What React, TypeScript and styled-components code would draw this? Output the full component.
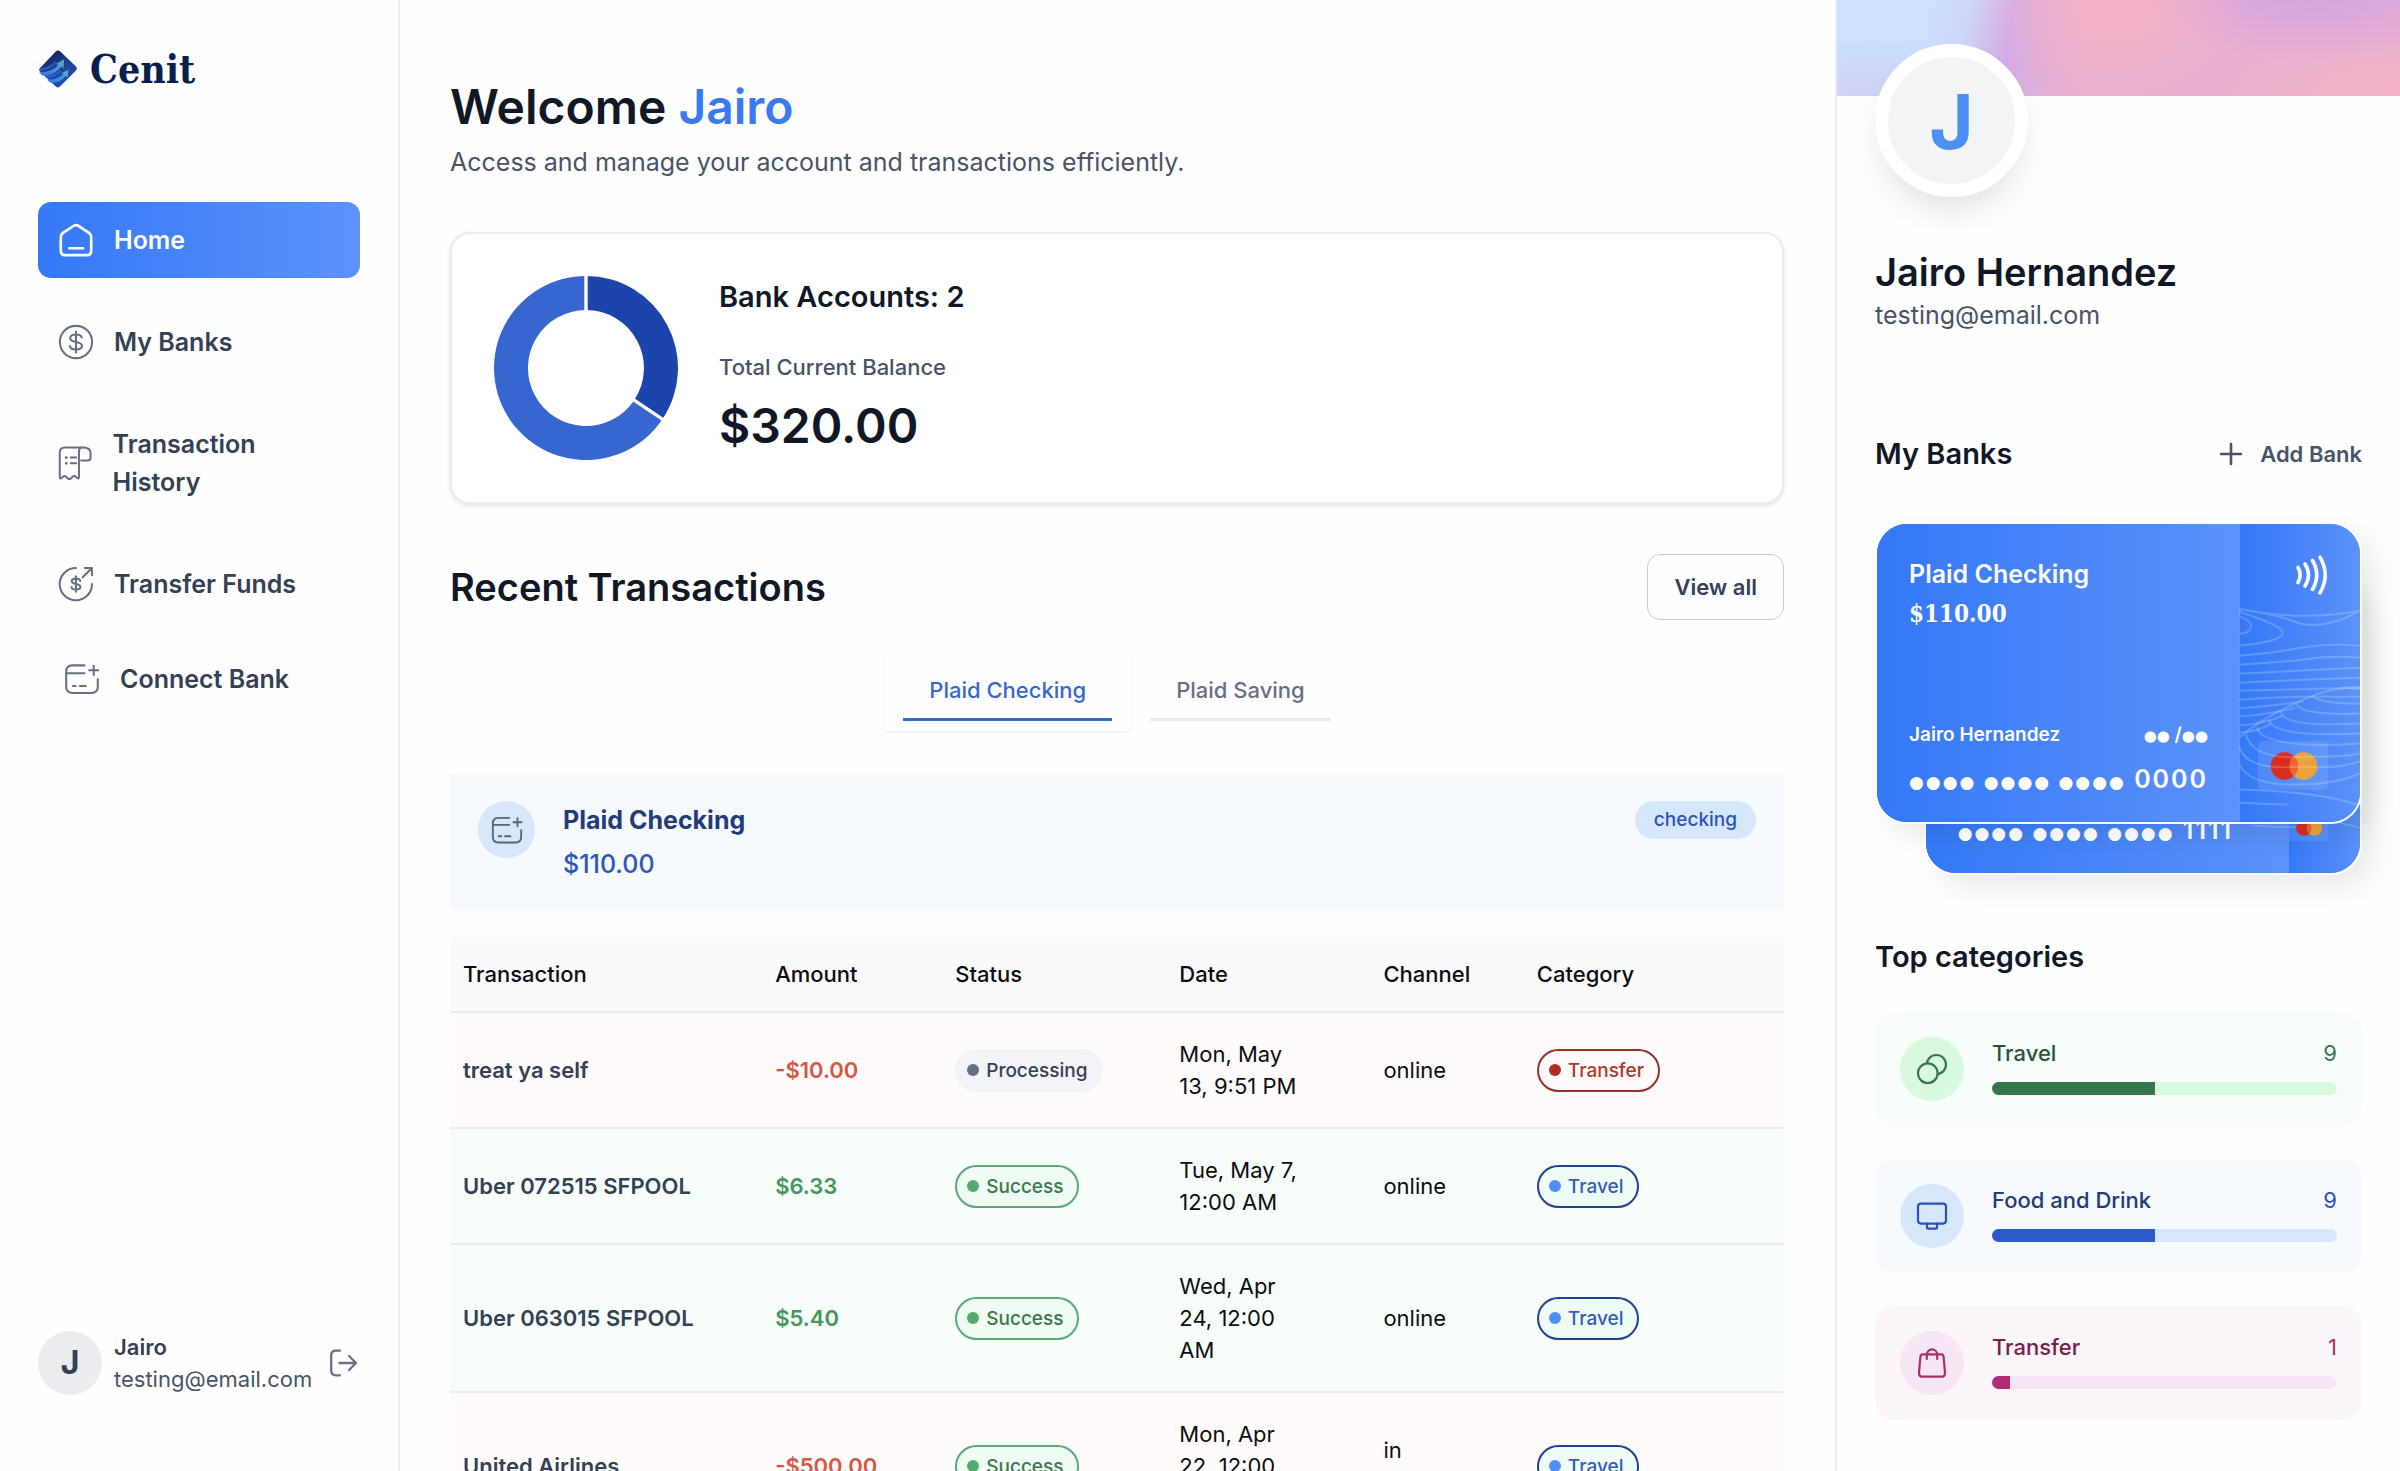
import React from "react";
import styled, { createGlobalStyle, css } from "styled-components";

const GlobalStyle = createGlobalStyle`
  *, *::before, *::after { box-sizing: border-box; }
  body {
    margin: 0;
    background: #fefefe;
    color: #0b0d12;
    font-family: Inter, "Liberation Sans", sans-serif;
    font-size: 22px;
    line-height: 32px;
  }
  h1, h2, h3, p { margin: 0; }
  button { font: inherit; color: inherit; background: none; border: 0; padding: 0; cursor: pointer; }
  a { color: inherit; text-decoration: none; }
  svg { display: block; }
`;

const ink = "#101828";
const slate = "#344054";
const muted = "#475467";
const hairline = "#eaecf0";
const gradient = "linear-gradient(90deg, #3478f6, #5c92f9)";
const serif = `"DejaVu Serif Condensed", "DejaVu Serif", serif`;

/* ---------- shell ---------- */

const Shell = styled.div`
  display: flex;
  height: 100vh;
`;

const Sidebar = styled.aside`
  display: flex;
  flex: 0 0 400px;
  flex-direction: column;
  justify-content: space-between;
  padding: 50px 38px 76px;
  border-right: 2px solid #eeeff1;
`;

const Main = styled.main`
  flex: 1;
  min-width: 0;
  overflow-y: auto;
  scrollbar-width: none;
  padding: 77px 51px 0 50px;
`;

const RightPanel = styled.aside`
  flex: 0 0 565px;
  overflow-y: auto;
  scrollbar-width: none;
  border-left: 2px solid #eaecf0;
`;

/* ---------- sidebar ---------- */

const Brand = styled.a`
  display: flex;
  align-items: center;
  gap: 12px;
  height: 38px;
  margin-bottom: 114px;
  color: #0b1f4f;
  font-family: ${serif};
  font-size: 39px;
  font-weight: 700;
`;

const Nav = styled.nav`
  display: flex;
  flex-direction: column;
  gap: 26px;
`;

const navItem = css`
  display: flex;
  align-items: center;
  gap: 19px;
  font-size: 25px;
  font-weight: 600;
  line-height: 38px;
  text-align: left;
`;

const NavLink = styled.a<{ $active?: boolean }>`
  ${navItem}
  padding: 19px;
  border-radius: 13px;
  color: ${(p) => (p.$active ? "#fff" : slate)};
  background: ${(p) => (p.$active ? gradient : "none")};
`;

const ConnectButton = styled.button`
  ${navItem}
  padding: 12px 25px;
  color: ${slate};
`;

const NavIcon = styled.svg`
  flex: 0 1 38px;
  width: 38px;
  height: 38px;
  fill: none;
  stroke: currentColor;
  stroke-width: 1.3;
  stroke-linecap: round;
  stroke-linejoin: round;
  ${NavLink}:not([aria-current]) &, ${ConnectButton} & { color: #667085; }
`;

const UserFooter = styled.footer`
  display: flex;
  align-items: center;
  gap: 12px;
`;

const UserInitial = styled.span`
  display: grid;
  place-items: center;
  flex: 0 0 64px;
  height: 64px;
  border-radius: 50%;
  background: #eaecf0;
  color: ${slate};
  font-size: 32px;
  font-weight: 700;
`;

const UserText = styled.div`
  flex: 1;
  color: ${muted};
  white-space: nowrap;
`;

const UserName = styled.p`
  color: ${slate};
  font-weight: 600;
`;

const LogoutButton = styled.button`
  flex: 0 0 32px;
  color: #667085;
`;

/* ---------- overview ---------- */

const Title = styled.h1`
  margin-bottom: 6px;
  color: ${ink};
  font-size: 48px;
  font-weight: 600;
  line-height: 60px;
  span { color: #3a7af0; }
`;

const Lead = styled.p`
  color: ${muted};
  font-size: 25px;
  line-height: 38px;
`;

const BalanceCard = styled.section`
  display: flex;
  align-items: center;
  gap: 41px;
  margin-top: 51px;
  padding: 42px;
  border: 2px solid #eaecf0;
  border-radius: 20px;
  background: #fff;
  box-shadow: 0 2px 4px rgba(16, 24, 40, 0.1);
`;

const CardHeading = styled.h2`
  color: ${ink};
  font-size: 29px;
  font-weight: 600;
  line-height: 36px;
`;

const BalanceLabel = styled.p`
  margin-top: 36px;
  color: ${muted};
  font-weight: 500;
`;

const BalanceValue = styled.p`
  margin-top: 16px;
  margin-bottom: 4px;
  color: ${ink};
  font-size: 48px;
  font-weight: 600;
  line-height: 54px;
`;

/* ---------- transactions ---------- */

const SectionBar = styled.header`
  display: flex;
  align-items: center;
  justify-content: space-between;
  margin-top: 50px;
`;

const SectionTitle = styled.h2`
  color: ${ink};
  font-size: 38px;
  font-weight: 600;
  line-height: 48px;
`;

const ViewAll = styled.a`
  padding: 16px 26px;
  border: 1px solid #c8cdd3;
  border-radius: 13px;
  color: ${slate};
  font-weight: 600;
`;

const Tabs = styled.div`
  display: flex;
  justify-content: center;
  margin: 32px 0 43px;
`;

const Tab = styled.button<{ $active?: boolean }>`
  padding: 10px 19px;
  border-radius: 3px;
  color: ${(p) => (p.$active ? "#3766d0" : "#667085")};
  font-weight: 500;
  box-shadow: ${(p) => (p.$active ? "0 1px 3px rgba(16, 24, 40, 0.08)" : "none")};
  span {
    display: block;
    padding: 12px 26px;
    border-bottom: 3px solid ${(p) => (p.$active ? "#3766d0" : "#eaeaec")};
  }
`;

const AccountBanner = styled.section`
  display: flex;
  align-items: flex-start;
  gap: 28px;
  padding: 27px 28px;
  background: #f6f9fe;
`;

const AccountIcon = styled.span`
  display: grid;
  place-items: center;
  width: 57px;
  height: 57px;
  border-radius: 50%;
  background: #d6e7fb;
  color: #56637a;
`;

const AccountText = styled.div`
  flex: 1;
  font-size: 25px;
  line-height: 38px;
`;

const AccountName = styled.h3`
  margin-bottom: 6px;
  color: #223c78;
  font-size: 25px;
  font-weight: 700;
`;

const AccountAmount = styled.p`
  color: #2c57b8;
  font-weight: 500;
`;

const AccountType = styled.span`
  padding: 5px 19px;
  border-radius: 19px;
  background: #d6e7fb;
  color: #2c52b8;
  font-size: 19px;
  font-weight: 500;
  line-height: 28px;
`;

const Table = styled.table`
  width: 100%;
  margin-top: 27px;
  table-layout: fixed;
  border-spacing: 0;
  text-align: left;
`;

const HeadCell = styled.th<{ $share: number }>`
  width: ${(p) => p.$share}%;
  height: 76px;
  padding: 0 13px;
  border-bottom: 2px solid ${hairline};
  background: #f9fafc;
  font-weight: 500;
`;

const Row = styled.tr<{ $debit: boolean }>`
  background: ${(p) => (p.$debit ? "#fefbfa" : "#f7fdf9")};
`;

const Cell = styled.td<{ $end?: number }>`
  padding: 25px ${(p) => p.$end ?? 13}px 25px 13px;
  border-bottom: 2px solid ${hairline};
`;

const NameCell = styled(Cell)`
  color: ${slate};
  font-weight: 600;
  white-space: nowrap;
`;

const AmountCell = styled(Cell)<{ $debit: boolean }>`
  color: ${(p) => (p.$debit ? "#d65746" : "#45965d")};
  font-weight: 600;
`;

type Tone = "processing" | "success" | "transfer" | "travel";

const tones: Record<Tone, { edge: string; fill: string; dot: string; text: string }> = {
  processing: { edge: "#f2f4f9", fill: "#f2f4f9", dot: "#667085", text: slate },
  success: { edge: "#5aa777", fill: "#effcf4", dot: "#54ab6d", text: "#3b774d" },
  transfer: { edge: "#96302a", fill: "#fefbfa", dot: "#ae2c23", text: "#b0372c" },
  travel: { edge: "#1f4192", fill: "#effbf5", dot: "#4f8ff7", text: "#325dbb" },
};

const Pill = styled.span<{ $tone: Tone }>`
  display: inline-flex;
  align-items: center;
  gap: 7px;
  padding: 5px 14px 5px 10px;
  border: 2px solid ${(p) => tones[p.$tone].edge};
  border-radius: 22px;
  background: ${(p) => tones[p.$tone].fill};
  color: ${(p) => tones[p.$tone].text};
  font-size: 19px;
  font-weight: 500;
  line-height: 29px;
  vertical-align: middle;
  &::before {
    content: "";
    width: 12px;
    height: 12px;
    border-radius: 50%;
    background: ${(p) => tones[p.$tone].dot};
  }
`;

/* ---------- right panel ---------- */

const Cover = styled.div`
  height: 96px;
  background:
    radial-gradient(ellipse 130px 110px at 49% -10%, rgba(246, 179, 196, 0.85) 10%, rgba(246, 179, 196, 0) 100%),
    radial-gradient(ellipse 190px 90px at 84% -30%, #cf9fe4 10%, rgba(207, 159, 228, 0) 100%),
    radial-gradient(ellipse 180px 70px at 100% 100%, #f3b3c4 0%, rgba(243, 179, 196, 0) 100%),
    radial-gradient(ellipse 200px 90px at 6% 130%, rgba(213, 200, 240, 0.9) 0%, rgba(213, 200, 240, 0) 100%),
    linear-gradient(102deg, #cbe1ff 16%, #cfd6fa 23%, #d3a9e6 31%, #deaddb 36%, #e9b0ce 44%, #e8b0cf 100%);
`;

const PanelBody = styled.div`
  padding: 0 38px;
`;

const Avatar = styled.div`
  position: relative;
  display: grid;
  place-items: center;
  width: 153px;
  height: 153px;
  margin-top: -52px;
  border: 13px solid #fff;
  border-radius: 50%;
  background: #f2f4f6;
  box-shadow: 0 19px 30px -8px rgba(16, 24, 40, 0.13);
  color: #4f8ff3;
  font-size: 76px;
  font-weight: 700;
`;

const ProfileName = styled.h2`
  margin-top: 51px;
  color: ${ink};
  font-size: 38px;
  font-weight: 600;
  line-height: 48px;
`;

const PanelBar = styled.header`
  display: flex;
  align-items: center;
  justify-content: space-between;
  margin: 102px 0 50px;
`;

const AddBank = styled.a`
  display: flex;
  align-items: center;
  gap: 13px;
  color: ${muted};
  font-weight: 600;
`;

const CardStack = styled.div`
  display: flex;
  flex-direction: column;
  align-items: flex-end;
`;

const BankCard = styled.a<{ $behind?: boolean }>`
  position: relative;
  z-index: ${(p) => (p.$behind ? 0 : 1)};
  display: flex;
  width: ${(p) => (p.$behind ? 90 : 100)}%;
  height: 302px;
  margin-top: ${(p) => (p.$behind ? -251 : 0)}px;
  overflow: hidden;
  border: 2px solid #fff;
  border-radius: 32px;
  background: ${gradient};
  box-shadow: 12px 12px 25px rgba(0, 0, 0, 0.08);
  color: #fff;
`;

const CardFace = styled.div`
  display: flex;
  flex: 0 0 363px;
  flex-direction: column;
  justify-content: space-between;
  min-width: 0;
  padding: 31px 32px 24px;
  background: ${gradient};
  font-size: 25px;
  font-weight: 600;
  line-height: 38px;
`;

const CardBalance = styled.p`
  margin-top: 2px;
  font-family: ${serif};
  font-size: 24px;
  font-weight: 700;
`;

const CardHolder = styled.div`
  display: flex;
  justify-content: space-between;
  margin-bottom: 11px;
  font-size: 19px;
  line-height: 28px;
`;

const CardNumber = styled.p`
  letter-spacing: 2px;
  white-space: nowrap;
`;

const Bullets = styled.span<{ $small?: boolean }>`
  font-family: "DejaVu Sans", sans-serif;
  font-size: ${(p) => (p.$small ? 15 : 17)}px;
  font-weight: 400;
  line-height: 1;
`;

const CardSide = styled.div`
  display: flex;
  flex: 1;
  flex-direction: column;
  align-items: flex-end;
  justify-content: space-between;
  min-width: 0;
  padding: 31px 32px 32px 0;
  background: ${gradient};
  svg { max-width: 100%; height: auto; }
`;

const CardLines = styled.svg`
  position: absolute;
  top: 0;
  right: 0;
  width: 25%;
  fill: none;
  stroke: rgba(255, 255, 255, 0.2);
  stroke-width: 2;
`;

const CategoriesTitle = styled(CardHeading)`
  margin: 64px 0 37px;
`;

const CategoryList = styled.div`
  display: flex;
  flex-direction: column;
  gap: 33px;
`;

interface Palette {
  card: string;
  soft: string;
  label: string;
  strong: string;
  bar: string;
}

const CategoryCard = styled.section<{ $p: Palette }>`
  display: flex;
  gap: 28px;
  padding: 25px;
  border-radius: 19px;
  background: ${(c) => c.$p.card};
  color: ${(c) => c.$p.label};
  font-weight: 500;
`;

const CategoryIcon = styled.span<{ $p: Palette }>`
  display: grid;
  place-items: center;
  width: 64px;
  height: 64px;
  border-radius: 50%;
  background: ${(c) => c.$p.soft};
  color: ${(c) => c.$p.strong};
`;

const CategoryBody = styled.div`
  flex: 1;
`;

const CategoryRow = styled.div`
  display: flex;
  justify-content: space-between;
  margin-bottom: 13px;
`;

const Count = styled.span<{ $p: Palette }>`
  color: ${(c) => c.$p.strong};
  font-weight: 400;
`;

const Track = styled.div<{ $p: Palette }>`
  height: 13px;
  overflow: hidden;
  border-radius: 7px;
  background: ${(c) => c.$p.soft};
`;

const Fill = styled.div<{ $p: Palette }>`
  height: 100%;
  background: ${(c) => c.$p.bar};
`;

/* ---------- icons ---------- */

const BrandMark = () => (
  <svg width="40" height="38" viewBox="0 0 40 38" aria-hidden="true">
    <defs>
      <linearGradient id="mark" x1="0.2" y1="0" x2="0.6" y2="1">
        <stop offset="0" stopColor="#0d1f52" />
        <stop offset="0.5" stopColor="#1c4390" />
        <stop offset="1" stopColor="#2350c4" />
      </linearGradient>
      <linearGradient id="sweep" x1="0" y1="1" x2="1" y2="0">
        <stop offset="0" stopColor="#2f6fe8" />
        <stop offset="1" stopColor="#5fb3c4" />
      </linearGradient>
    </defs>
    <path d="M18 1.2Q20 -0.4 22 1.2L38 16.6Q39.6 18.4 38 20.4L22 36.6Q20 38.4 18 36.8L2 21.6Q0.6 20 1.6 18.4Z" fill="url(#mark)" />
    <path d="M1 22.6Q16 22 20.6 14.6L17 14.4L26 9.6L25.4 19L23.4 16.6Q16 26.6 4.6 25.6Z" fill="url(#sweep)" />
    <path d="M9 29.6Q21 30 25.4 23.8L22.6 23.4L30.4 20L29.6 28L27.8 25.8Q22 33.6 12 32.6Z" fill="url(#sweep)" />
    <path d="M2 19.6Q12 19 17.6 12" fill="none" stroke="#2f63d6" strokeWidth="1.6" />
    <path d="M7.6 27.2Q17 26.6 22.6 20.6" fill="none" stroke="#2f63d6" strokeWidth="1.6" />
  </svg>
);

const HomeIcon = () => (
  <NavIcon viewBox="0 0 24 24" aria-hidden="true">
    <path strokeWidth="1.7" d="M3.8 7.5L10.6 3Q12 2.1 13.4 3L20.2 7.5Q21.6 8.5 21.6 10.1V18.8Q21.6 21.6 18.8 21.6H5.2Q2.4 21.6 2.4 18.8V10.1Q2.4 8.5 3.8 7.5Z" />
    <path strokeWidth="1.7" d="M7.8 17.2h8.6" />
  </NavIcon>
);

const BanksIcon = () => (
  <NavIcon viewBox="0 0 24 24" aria-hidden="true">
    <circle cx="12" cy="12" r="10.2" />
    <path d="M15.6 9.2C15.4 7.9 14 7.3 12 7.3S8.3 8.1 8.3 9.6C8.3 12.9 15.8 11 15.8 14.4 15.8 16 14.2 16.7 12 16.7S8.3 16 8.2 14.6M12 5.4v13.2" />
  </NavIcon>
);

const HistoryIcon = () => (
  <NavIcon viewBox="0 0 24 24" aria-hidden="true">
    <path d="M18.4 1.8H5.2Q1.8 1.8 1.8 5.2V21.4q0 1.2 1.1.5l1.2-1q1-.8 1.9.2l1.2 1q.9.8 1.8 0l1.2-1q.9-1 1.9-.2l1.2 1q1.1.7 1.1-.5V4.6q0-2.8 2.4-2.8Q22 1.8 22 5.4V8.6Q22 10.4 20.2 10.4H15.8" />
    <path d="M9 8.4h3.6M9 12.2h3.6" />
    <path strokeWidth="1.8" d="M6 8.4h.1M6 12.2h.1" />
  </NavIcon>
);

const TransferIcon = () => (
  <NavIcon viewBox="0 0 24 24" aria-hidden="true">
    <path d="M12 1.9A10.2 10.2 0 1 0 22.1 12" />
    <path d="M16.2 7.8L22 2M17.6 1.9H22.1V6.4" />
    <path d="M14.6 10.1C14.5 9 13.4 8.6 12 8.6S9.3 9.1 9.3 10.3C9.3 12.7 14.8 11.4 14.8 13.8 14.8 15 13.6 15.5 12 15.5S9.2 15 9.2 13.9M12 7.1v9.8" />
  </NavIcon>
);

const cardPlusPath = "M13.6 3.4H6Q2 3.4 2 7.4V16.8Q2 20.8 6 20.8H18Q22 20.8 22 16.8V12.2M2 8.4H13.6M19.4 3.6V9.4M16.5 6.5H22.3M6.2 16.4H8M10.6 16.4H14.4";

const ConnectIcon = () => (
  <NavIcon viewBox="0 0 24 24" aria-hidden="true">
    <path d={cardPlusPath} />
  </NavIcon>
);

const LogoutIcon = () => (
  <svg width="32" height="32" viewBox="0 0 24 24" fill="none" stroke="currentColor" strokeWidth="1.7" strokeLinecap="round" strokeLinejoin="round" aria-hidden="true">
    <path d="M9 2.8H6Q2.4 2.8 2.4 6.4V17.6Q2.4 21.2 6 21.2H9M8.6 12H21M15.8 6.8L21 12L15.8 17.2" />
  </svg>
);

const ContactlessIcon = () => (
  <svg width="32" height="40" viewBox="0 0 32 40" fill="none" stroke="#fff" strokeWidth="3.6" strokeLinecap="round" aria-hidden="true">
    <path d="M2 12.5Q6.4 20 2 27.5M9 9Q16 20 9 31M16.5 5.5Q25 20 16.5 34.5M24 2.2Q34.4 20 24 37.8" />
  </svg>
);

const MastercardIcon = () => (
  <svg width="70" height="49" viewBox="0 0 70 49" aria-label="Mastercard" role="img">
    <rect width="70" height="49" rx="5" fill="#fff" fillOpacity="0.1" />
    <circle cx="26.5" cy="25" r="13.8" fill="#da2c1f" />
    <circle cx="45.5" cy="25" r="13.8" fill="#eba23a" />
    <path d="M36 15A13.8 13.8 0 0 1 36 35A13.8 13.8 0 0 1 36 15Z" fill="#ea6434" />
  </svg>
);

const Lines = () => (
  <CardLines viewBox="0 0 121 302" aria-hidden="true">
    <path d="M0 85Q62 98 121 87M0 86Q30 88 62 100Q90 105 121 87M0 88Q30 98 40 104Q50 112 32 117Q16 121 0 122M0 92Q14 98 12 103Q10 110 0 110" />
    <path d="M0 132Q34 129 62 124Q92 119 121 122M0 141Q50 138 78 134Q100 132 121 134M0 150Q60 147 121 144M0 159Q60 156 121 154M0 167Q70 165 121 164M0 176Q60 172 95 173H121" />
    <path d="M0 185Q40 181 65 178M0 193Q36 190 56 184M0 202Q26 200 44 192M0 209Q18 209 32 200" />
    <path d="M0 214Q24 194 64 176Q90 164 121 163M106 163q6 3 15 2M74 173Q84 180 121 180M57 180Q62 192 121 190M42 188Q44 204 121 200M30 196Q34 214 121 210M18 204Q24 226 121 220M7 211Q14 238 70 233Q100 234 121 230M0 222Q6 248 62 243Q96 246 121 238M0 240Q10 266 80 260Q104 258 121 250" />
    <path d="M0 266Q80 268 121 282M0 279Q30 281 50 281" />
  </CardLines>
);

const iconProps = {
  width: 32,
  height: 32,
  viewBox: "0 0 32 32",
  fill: "none",
  stroke: "currentColor",
  strokeWidth: 2.2,
  strokeLinejoin: "round",
  strokeLinecap: "round",
  "aria-hidden": true,
} as const;

const CoinsIcon = () => (
  <svg {...iconProps}>
    <circle cx="20.4" cy="11.6" r="9.6" />
    <circle cx="11.8" cy="20.2" r="9.8" fill="#d8f9df" />
  </svg>
);

const MonitorIcon = () => (
  <svg {...iconProps}>
    <rect x="2" y="3.6" width="28" height="20" rx="3" />
    <path d="M11 23.6V27.4Q11 28.6 12.2 28.6H19.8Q21 28.6 21 27.4V23.6" />
  </svg>
);

const BagIcon = () => (
  <svg {...iconProps}>
    <path d="M7 7.4H25Q27.4 7.4 27.6 9.8L29 26Q29 29.6 26 29.6H6Q3 29.6 3 26L4.4 9.8Q4.6 7.4 7 7.4Z" />
    <path d="M10.8 12V7.6A5.2 5.2 0 0 1 21.2 7.6V12" />
  </svg>
);

const BalanceChart = () => (
  <svg width="184" height="184" viewBox="0 0 184 184" role="img" aria-label="Balance by account">
    <path d="M92 0A92 92 0 0 1 168.5 143.1L140.2 124.2A58 58 0 0 0 92 34Z" fill="#1c44ad" />
    <path d="M168.5 143.1A92 92 0 1 1 92 0V34A58 58 0 1 0 140.2 124.2Z" fill="#3766d0" />
    <path d="M92 0V35M139 123.4L169.5 143.8" stroke="#fff" strokeWidth="3.4" />
  </svg>
);

/* ---------- data ---------- */

const columns = [
  { label: "Transaction", share: 23.4 },
  { label: "Amount", share: 13.5 },
  { label: "Status", share: 16.8 },
  { label: "Date", share: 15.3 },
  { label: "Channel", share: 11.5 },
  { label: "Category", share: 19.5 },
];

const transactions: {
  name: string;
  amount: string;
  status: [Tone, string];
  date: string;
  channel: string;
  category: [Tone, string];
}[] = [
  { name: "treat ya self", amount: "-$10.00", status: ["processing", "Processing"], date: "Mon, May 13, 9:51 PM", channel: "online", category: ["transfer", "Transfer"] },
  { name: "Uber 072515 SFPOOL", amount: "$6.33", status: ["success", "Success"], date: "Tue, May 7, 12:00 AM", channel: "online", category: ["travel", "Travel"] },
  { name: "Uber 063015 SFPOOL", amount: "$5.40", status: ["success", "Success"], date: "Wed, Apr 24, 12:00 AM", channel: "online", category: ["travel", "Travel"] },
  { name: "United Airlines", amount: "-$500.00", status: ["success", "Success"], date: "Mon, Apr 22, 12:00 AM", channel: "in store", category: ["travel", "Travel"] },
];

const categories: { name: string; count: number; icon: React.ReactNode; palette: Palette }[] = [
  { name: "Travel", count: 9, icon: <CoinsIcon />, palette: { card: "#f7fdf9", soft: "#d8f9df", label: "#28543a", strong: "#35774a", bar: "#35774a" } },
  { name: "Food and Drink", count: 9, icon: <MonitorIcon />, palette: { card: "#f6f9fe", soft: "#d6e7fb", label: "#223c78", strong: "#2c52b8", bar: "#2c5aca" } },
  { name: "Transfer", count: 1, icon: <BagIcon />, palette: { card: "#fcf6fb", soft: "#f6e6f3", label: "#74204e", strong: "#a92c6c", bar: "#b02c74" } },
];

const categoryTotal = categories.reduce((sum, c) => sum + c.count, 0);

const cards = [
  { name: "Plaid Checking", balance: "$110.00", mask: "0000" },
  { name: "Plaid Saving", balance: "$210.00", mask: "1111" },
];

/* ---------- page ---------- */

export default function App() {
  return (
    <>
      <GlobalStyle />
      <Shell>
        <Sidebar>
          <div>
            <Brand href="#">
              <BrandMark />
              Cenit
            </Brand>
            <Nav>
              <NavLink href="#home" $active aria-current="page"><HomeIcon />Home</NavLink>
              <NavLink href="#banks"><BanksIcon />My Banks</NavLink>
              <NavLink href="#history"><HistoryIcon />Transaction History</NavLink>
              <NavLink href="#transfer"><TransferIcon />Transfer Funds</NavLink>
              <ConnectButton type="button"><ConnectIcon />Connect Bank</ConnectButton>
            </Nav>
          </div>
          <UserFooter>
            <UserInitial>J</UserInitial>
            <UserText>
              <UserName>Jairo</UserName>
              <p>testing@email.com</p>
            </UserText>
            <LogoutButton type="button" aria-label="Log out"><LogoutIcon /></LogoutButton>
          </UserFooter>
        </Sidebar>

        <Main>
          <header>
            <Title>Welcome <span>Jairo</span></Title>
            <Lead>Access and manage your account and transactions efficiently.</Lead>
          </header>

          <BalanceCard>
            <BalanceChart />
            <div>
              <CardHeading>Bank Accounts: 2</CardHeading>
              <BalanceLabel>Total Current Balance</BalanceLabel>
              <BalanceValue>$320.00</BalanceValue>
            </div>
          </BalanceCard>

          <SectionBar>
            <SectionTitle>Recent Transactions</SectionTitle>
            <ViewAll href="#history">View all</ViewAll>
          </SectionBar>

          <Tabs role="tablist">
            <Tab type="button" role="tab" aria-selected="true" $active><span>Plaid Checking</span></Tab>
            <Tab type="button" role="tab" aria-selected="false"><span>Plaid Saving</span></Tab>
          </Tabs>

          <AccountBanner>
            <AccountIcon>
              <svg width="34" height="34" viewBox="0 0 24 24" fill="none" stroke="currentColor" strokeWidth="1.3" strokeLinecap="round" aria-hidden="true">
                <path d={cardPlusPath} />
              </svg>
            </AccountIcon>
            <AccountText>
              <AccountName>Plaid Checking</AccountName>
              <AccountAmount>$110.00</AccountAmount>
            </AccountText>
            <AccountType>checking</AccountType>
          </AccountBanner>

          <Table>
            <thead>
              <tr>
                {columns.map((c) => (
                  <HeadCell key={c.label} scope="col" $share={c.share}>{c.label}</HeadCell>
                ))}
              </tr>
            </thead>
            <tbody>
              {transactions.map((t) => {
                const debit = t.amount.startsWith("-");
                return (
                  <Row key={t.name} $debit={debit}>
                    <NameCell>{t.name}</NameCell>
                    <AmountCell $debit={debit}>{t.amount}</AmountCell>
                    <Cell><Pill $tone={t.status[0]}>{t.status[1]}</Pill></Cell>
                    <Cell $end={63}>{t.date}</Cell>
                    <Cell $end={76}>{t.channel}</Cell>
                    <Cell><Pill $tone={t.category[0]}>{t.category[1]}</Pill></Cell>
                  </Row>
                );
              })}
            </tbody>
          </Table>
        </Main>

        <RightPanel>
          <Cover />
          <PanelBody>
            <Avatar>J</Avatar>
            <ProfileName>Jairo Hernandez</ProfileName>
            <Lead>testing@email.com</Lead>

            <PanelBar>
              <CardHeading>My Banks</CardHeading>
              <AddBank href="#banks">
                <svg width="32" height="32" viewBox="0 0 32 32" stroke="currentColor" strokeWidth="2.6" strokeLinecap="round" aria-hidden="true">
                  <path d="M16 6V26M6 16H26" />
                </svg>
                Add Bank
              </AddBank>
            </PanelBar>

            <CardStack>
              {cards.map((card, i) => (
                <BankCard key={card.mask} href="#card" $behind={i > 0}>
                  <CardFace>
                    <div>
                      <p>{card.name}</p>
                      <CardBalance>{card.balance}</CardBalance>
                    </div>
                    <div>
                      <CardHolder>
                        <span>Jairo Hernandez</span>
                        <span><Bullets $small>●●</Bullets> /<Bullets $small>●●</Bullets></span>
                      </CardHolder>
                      <CardNumber><Bullets>●●●● ●●●● ●●●●</Bullets> {card.mask}</CardNumber>
                    </div>
                  </CardFace>
                  <CardSide>
                    <ContactlessIcon />
                    <MastercardIcon />
                  </CardSide>
                  <Lines />
                </BankCard>
              ))}
            </CardStack>

            <CategoriesTitle>Top categories</CategoriesTitle>
            <CategoryList>
              {categories.map((c) => (
                <CategoryCard key={c.name} $p={c.palette}>
                  <CategoryIcon $p={c.palette}>{c.icon}</CategoryIcon>
                  <CategoryBody>
                    <CategoryRow>
                      <span>{c.name}</span>
                      <Count $p={c.palette}>{c.count}</Count>
                    </CategoryRow>
                    <Track $p={c.palette}>
                      <Fill $p={c.palette} style={{ width: `${(c.count / categoryTotal) * 100}%` }} />
                    </Track>
                  </CategoryBody>
                </CategoryCard>
              ))}
            </CategoryList>
          </PanelBody>
        </RightPanel>
      </Shell>
    </>
  );
}
